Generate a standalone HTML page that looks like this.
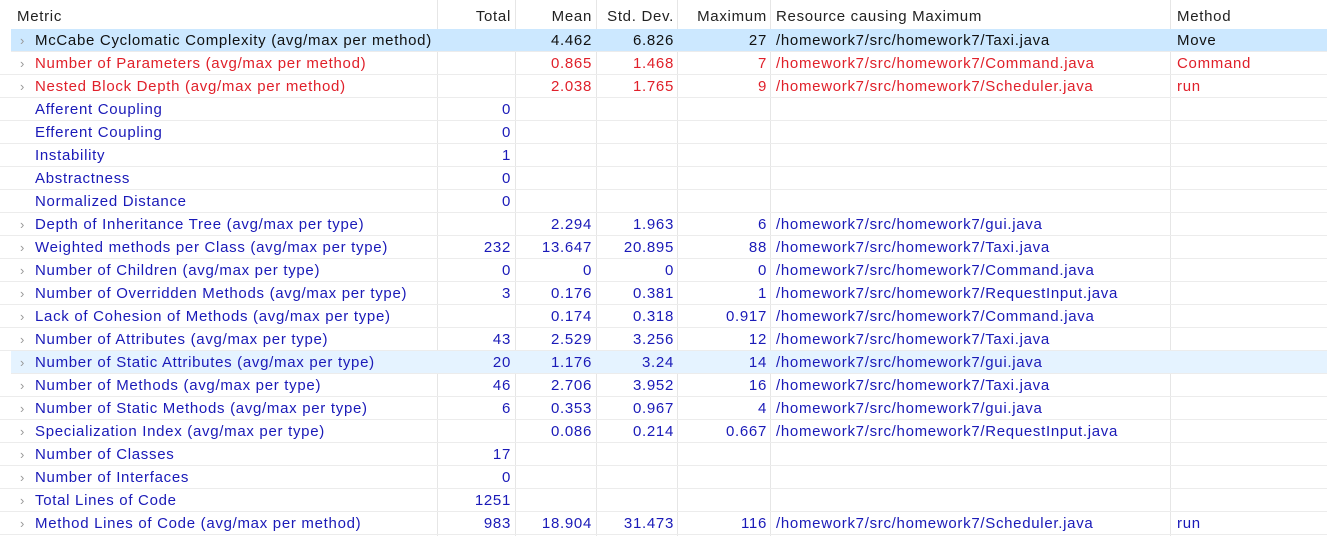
<!DOCTYPE html>
<html><head><meta charset="utf-8"><style>
body{margin:0;width:1327px;height:542px;background:#fff;overflow:hidden;font-family:"Liberation Sans","Noto Sans CJK SC",sans-serif;font-size:15px;letter-spacing:0.7px;}
.r{position:absolute;left:0;width:1327px;height:23px;line-height:24px;border-bottom:1px solid #ececec;box-sizing:border-box;color:#1a1ab8;}
.r div{position:absolute;top:0;height:23px;white-space:nowrap;}
.h{color:#222;top:5px;}
.c1{left:35px}.c2{left:437px;width:74px;text-align:right}.c3{left:515px;width:77px;text-align:right}.c4{left:596px;width:78px;text-align:right}.c5{left:677px;width:90px;text-align:right}.c6{left:776px}.c7{left:1177px}
.a{left:20px;color:#999;font-size:13px}
.red{color:#e0202a}.blk{color:#111}
.sel{background:#cce8ff}.sel2{background:#e5f3ff}
.v{position:absolute;top:0;height:536px;width:1px;background:#e6e6e6}
</style></head><body>
<div class="v" style="left:437px"></div><div class="v" style="left:515px"></div><div class="v" style="left:596px"></div><div class="v" style="left:677px"></div><div class="v" style="left:770px"></div><div class="v" style="left:1170px"></div>
<div class="r h" style="top:5px;height:24px;border:none"><div style="left:17px">Metric</div><div class="c2">Total</div><div class="c3">Mean</div><div class="c4">Std. Dev.</div><div class="c5">Maximum</div><div class="c6">Resource causing Maximum</div><div class="c7">Method</div></div>
<div class="r blk sel" style="top:29px;left:11px;width:1316px"><div class="a" style="left:9px">›</div><div style="left:24px">McCabe Cyclomatic Complexity (avg/max per method)</div><div style="left:504px;width:77px;text-align:right">4.462</div><div style="left:585px;width:78px;text-align:right">6.826</div><div style="left:666px;width:90px;text-align:right">27</div><div style="left:765px">/homework7/src/homework7/Taxi.java</div><div style="left:1166px">Move</div></div>
<div class="r red" style="top:52px"><div class="a">›</div><div class="c1">Number of Parameters (avg/max per method)</div><div class="c3">0.865</div><div class="c4">1.468</div><div class="c5">7</div><div class="c6">/homework7/src/homework7/Command.java</div><div class="c7">Command</div></div>
<div class="r red" style="top:75px"><div class="a">›</div><div class="c1">Nested Block Depth (avg/max per method)</div><div class="c3">2.038</div><div class="c4">1.765</div><div class="c5">9</div><div class="c6">/homework7/src/homework7/Scheduler.java</div><div class="c7">run</div></div>
<div class="r" style="top:98px"><div class="c1">Afferent Coupling</div><div class="c2">0</div></div>
<div class="r" style="top:121px"><div class="c1">Efferent Coupling</div><div class="c2">0</div></div>
<div class="r" style="top:144px"><div class="c1">Instability</div><div class="c2">1</div></div>
<div class="r" style="top:167px"><div class="c1">Abstractness</div><div class="c2">0</div></div>
<div class="r" style="top:190px"><div class="c1">Normalized Distance</div><div class="c2">0</div></div>
<div class="r" style="top:213px"><div class="a">›</div><div class="c1">Depth of Inheritance Tree (avg/max per type)</div><div class="c3">2.294</div><div class="c4">1.963</div><div class="c5">6</div><div class="c6">/homework7/src/homework7/gui.java</div></div>
<div class="r" style="top:236px"><div class="a">›</div><div class="c1">Weighted methods per Class (avg/max per type)</div><div class="c2">232</div><div class="c3">13.647</div><div class="c4">20.895</div><div class="c5">88</div><div class="c6">/homework7/src/homework7/Taxi.java</div></div>
<div class="r" style="top:259px"><div class="a">›</div><div class="c1">Number of Children (avg/max per type)</div><div class="c2">0</div><div class="c3">0</div><div class="c4">0</div><div class="c5">0</div><div class="c6">/homework7/src/homework7/Command.java</div></div>
<div class="r" style="top:282px"><div class="a">›</div><div class="c1">Number of Overridden Methods (avg/max per type)</div><div class="c2">3</div><div class="c3">0.176</div><div class="c4">0.381</div><div class="c5">1</div><div class="c6">/homework7/src/homework7/RequestInput.java</div></div>
<div class="r" style="top:305px"><div class="a">›</div><div class="c1">Lack of Cohesion of Methods (avg/max per type)</div><div class="c3">0.174</div><div class="c4">0.318</div><div class="c5">0.917</div><div class="c6">/homework7/src/homework7/Command.java</div></div>
<div class="r" style="top:328px"><div class="a">›</div><div class="c1">Number of Attributes (avg/max per type)</div><div class="c2">43</div><div class="c3">2.529</div><div class="c4">3.256</div><div class="c5">12</div><div class="c6">/homework7/src/homework7/Taxi.java</div></div>
<div class="r sel2" style="top:351px;left:11px;width:1316px"><div class="a" style="left:9px">›</div><div style="left:24px">Number of Static Attributes (avg/max per type)</div><div style="left:426px;width:74px;text-align:right">20</div><div style="left:504px;width:77px;text-align:right">1.176</div><div style="left:585px;width:78px;text-align:right">3.24</div><div style="left:666px;width:90px;text-align:right">14</div><div style="left:765px">/homework7/src/homework7/gui.java</div></div>
<div class="r" style="top:374px"><div class="a">›</div><div class="c1">Number of Methods (avg/max per type)</div><div class="c2">46</div><div class="c3">2.706</div><div class="c4">3.952</div><div class="c5">16</div><div class="c6">/homework7/src/homework7/Taxi.java</div></div>
<div class="r" style="top:397px"><div class="a">›</div><div class="c1">Number of Static Methods (avg/max per type)</div><div class="c2">6</div><div class="c3">0.353</div><div class="c4">0.967</div><div class="c5">4</div><div class="c6">/homework7/src/homework7/gui.java</div></div>
<div class="r" style="top:420px"><div class="a">›</div><div class="c1">Specialization Index (avg/max per type)</div><div class="c3">0.086</div><div class="c4">0.214</div><div class="c5">0.667</div><div class="c6">/homework7/src/homework7/RequestInput.java</div></div>
<div class="r" style="top:443px"><div class="a">›</div><div class="c1">Number of Classes</div><div class="c2">17</div></div>
<div class="r" style="top:466px"><div class="a">›</div><div class="c1">Number of Interfaces</div><div class="c2">0</div></div>
<div class="r" style="top:489px"><div class="a">›</div><div class="c1">Total Lines of Code</div><div class="c2">1251</div></div>
<div class="r" style="top:512px"><div class="a">›</div><div class="c1">Method Lines of Code (avg/max per method)</div><div class="c2">983</div><div class="c3">18.904</div><div class="c4">31.473</div><div class="c5">116</div><div class="c6">/homework7/src/homework7/Scheduler.java</div><div class="c7">run</div></div>
</body></html>
